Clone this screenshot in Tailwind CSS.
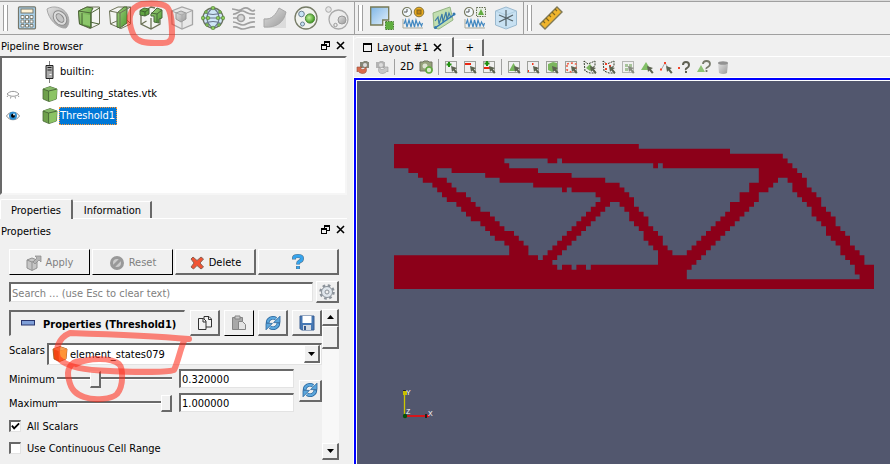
<!DOCTYPE html>
<html lang="en">
<head>
<meta charset="utf-8">
<title>ParaView</title>
<script src="https://cdn.jsdelivr.net/npm/@tailwindcss/browser@4"></script>
</head>
<body class="relative flex min-h-screen flex-col overflow-hidden bg-[#f0f0f0] font-['DejaVu_Sans_Condensed','DejaVu_Sans',sans-serif] text-[11px] leading-[14px] text-black">

<svg class="absolute size-0" aria-hidden="true">
  <defs>
    <linearGradient id="gBlue" x1="0" y1="0" x2="1" y2="1"><stop offset="0" stop-color="#7fb6e6"/><stop offset="1" stop-color="#e4f1fb"/></linearGradient>
    <linearGradient id="gGreen" x1="0" y1="0" x2="1" y2="1"><stop offset="0" stop-color="#9fd07c"/><stop offset="1" stop-color="#4f9a32"/></linearGradient>
    <linearGradient id="gGray" x1="0" y1="0" x2="1" y2="1"><stop offset="0" stop-color="#e2e2e2"/><stop offset="1" stop-color="#9a9a9a"/></linearGradient>
    <radialGradient id="gBall" cx=".4" cy=".4" r=".6"><stop offset="0" stop-color="#c4f29c"/><stop offset="1" stop-color="#3f9a22"/></radialGradient>
    <symbol id="cube" viewBox="0 0 16 16"><path d="M1 3 8 .6 15 3 14.4 13 7 15.6 1 13Z" fill="#6fa04c" stroke="#4b6b38" stroke-width=".8"/><path d="M6.500 5 15 3.200 14.300 13 6.800 15.300Z" fill="#8cc465"/><path d="M1 3 8 .8 14.600 3 6.500 5Z" fill="#86b868"/><path d="M6.600 5v10M1.200 3.200 6.600 5 14.600 3.200" fill="none" stroke="#3f5c30" stroke-width=".8"/></symbol>
    <symbol id="refresh" viewBox="0 0 16 16"><path d="M2.600 8.200A5.300 5.300 0 0 1 11 3.800" fill="none" stroke="#28659c" stroke-width="3.600"/><path d="M15 1.200v6.400H8.600Z" fill="#5ba6dc" stroke="#28659c" stroke-width=".8"/><path d="M13.400 7.800A5.300 5.300 0 0 1 5 12.200" fill="none" stroke="#28659c" stroke-width="3.600"/><path d="M1 14.800V8.400h6.400Z" fill="#5ba6dc" stroke="#28659c" stroke-width=".8"/><path d="M2.700 7.600A5.300 5.300 0 0 1 11 3.800M13.300 8.400A5.300 5.300 0 0 1 5 12.200" fill="none" stroke="#5ba6dc" stroke-width="2.200"/></symbol>
    <symbol id="float" viewBox="0 0 9 9"><path d="M3 0h6v6H6V5h2V2H4v1H3ZM0 3h6v6H0ZM1 5v3h4V5Z" fill="#000" fill-rule="evenodd"/></symbol>
    <symbol id="close" viewBox="0 0 9 9"><path d="M1 1l7 7M8 1 1 8" stroke="#000" stroke-width="1.600"/></symbol>
    <symbol id="cursor" viewBox="0 0 16 16"><path d="M8 7l6 2-2 1.200 2.600 3.200-1.600 1.400-2.600-3.400L9 13Z" fill="#5c6350"/></symbol>
    <symbol id="dots" viewBox="0 0 16 16"><rect x="2.500" y="2.500" width="11" height="11" fill="none" stroke="#4c5146" stroke-dasharray="1 1"/></symbol>
    <symbol id="poly" viewBox="0 0 16 16"><path d="M2 2l4 3 7-3v5l-3 2 4 5H8l-5-2Z" fill="none" stroke="#37402f" stroke-dasharray="2 1"/></symbol>
  </defs>
</svg>

<header class="flex h-9 shrink-0 border-t border-[#dcdcdc] pb-px">
  <div class="flex w-[355px] shrink-0 items-center gap-[7px] border-y border-r border-[#a0a0a0] pl-[3px]">
    <span class="h-[26px] w-[5px] border-x border-[#a0a0a0] bg-white"></span>
    <button aria-label="Calculator"><svg class="size-6" viewBox="0 0 24 24"><rect x="3.500" y=".8" width="17" height="22" rx="1" fill="#a9d2ee" stroke="#77776a" stroke-width="1.200"/><rect x="6" y="3" width="12" height="4" fill="#fff3d6" stroke="#77776a"/><g fill="#fff" stroke="#77776a" stroke-width=".9"><path d="M6 9.500h3v3H6ZM10.500 9.500h3v3h-3ZM15 9.500h3v3h-3ZM6 14h3v3H6ZM10.500 14h3v3h-3ZM15 14h3v3h-3ZM6 18.500h3v2.500H6ZM10.500 18.500h3v2.500h-3ZM15 18.500h3v2.500h-3Z"/></g></svg></button>
    <button aria-label="Contour"><svg class="size-6" viewBox="0 0 24 24"><path d="M1 3C7-1 17 1 21 8c3 6 2 11-1 14C12 23 2 13 1 3Z" fill="url(#gGray)" stroke="#a8a8a8"/><ellipse cx="14" cy="12" rx="6" ry="8" transform="rotate(-38 14 12)" fill="#ddd" stroke="#8c8c8c"/><ellipse cx="14" cy="12" rx="3" ry="5" transform="rotate(-38 14 12)" fill="#c4c4c4" stroke="#858585"/></svg></button>
    <button aria-label="Clip"><svg class="size-6" viewBox="0 0 24 24"><path d="M1.500 5 10 1h12.500v17L13 22.500 2.500 18Z" fill="#f4f5f2" stroke="#6d7358"/><path d="M1.500 5 10 1l6 1-2 4v16L2.500 18Z" fill="url(#gGreen)" stroke="#4d6638"/><path d="M1.500 5 14 7l8.500-5M5 7v12M14 7v15M13 16l9 2" fill="none" stroke="#4d6638"/><path d="M6 8l7 1v11l-7-2Z" fill="#8cc66a"/></svg></button>
    <button aria-label="Slice"><svg class="size-6" viewBox="0 0 24 24"><path d="M1.500 5 10 1h12.500v17L13 22.500 2.500 18Z" fill="#f4f5f2" stroke="#6d7358"/><path d="M9 7l7-6h3v16l-7 5-3-1Z" fill="url(#gGreen)" stroke="#4d6638"/><path d="M1.500 5 12 7l10.500-6M12 7v15M2 18l7-3M19 14l3 3" fill="none" stroke="#6d7358"/></svg></button>
    <button aria-label="Threshold"><svg class="size-6" viewBox="0 0 24 24"><path d="M2 6 12 1l10 4-1 13-9 5-10-5Z" fill="#f4f5f2"/><path d="M2 9v9l10 5 9-5V9M12 12v11M9 3l3-2 4 1M2.500 18l5-3" fill="none" stroke="#6d7358" stroke-width="1.300"/><path d="M1 4.500 5 2l5 1v5l-4 2-5-1Z" fill="#60a441" stroke="#49683a"/><path d="M1 4.500 6 6l4-3M6 6v4" stroke="#3f6130" fill="none"/><path d="M12 8l6-6 5 2v8l-3 1v4l-5-1v-6h-3Z" fill="url(#gGreen)" stroke="#49683a"/><path d="M12 7l6 1 5-4M18 8v8" stroke="#49683a" fill="none"/></svg></button>
    <button aria-label="Extract subset"><svg class="size-6" viewBox="0 0 24 24"><path d="M1.500 5 12 1l10.500 3.500v14L12 23 2 18Z" fill="#e8e8e8" stroke="#a5a5a5" stroke-width="1.300"/><path d="M1.500 5 12 9l10.500-4.500M12 9v14" fill="none" stroke="#a5a5a5"/><path d="M6 7l5-2 5 2v6l-5 3-5-3Z" fill="url(#gGray)" stroke="#999"/><path d="M6 7l6 2 4-2M12 9v6" fill="none" stroke="#aaa"/></svg></button>
    <button aria-label="Glyph"><svg class="size-6" viewBox="0 0 24 24"><circle cx="12" cy="12" r="10" fill="#cfe6f6" stroke="#6c7462" stroke-width="1.400"/><path d="M12 2C4 7 4 17 12 22M12 2c8 5 8 15 0 20M2 12h20M4 6.500c5 2.500 11 2.500 16 0M4 17.500c5-2.500 11-2.500 16 0" fill="none" stroke="#66758a" stroke-width="1.200"/><g fill="#8ccc5e" stroke="#4d7b31" stroke-width=".6"><circle cx="12" cy="2" r="1.800"/><circle cx="12" cy="22" r="1.800"/><circle cx="2" cy="12" r="1.800"/><circle cx="22" cy="12" r="1.800"/><circle cx="7" cy="12" r="1.800"/><circle cx="17" cy="12" r="1.800"/><circle cx="5" cy="6" r="1.400"/><circle cx="19" cy="6" r="1.400"/><circle cx="6" cy="19" r="1.400"/><circle cx="18" cy="19" r="1.400"/></g></svg></button>
    <button aria-label="Stream tracer"><svg class="size-6" viewBox="0 0 24 24"><g fill="none" stroke="#a0a0a0" stroke-width="1.700"><path d="M0 3c4 0 5 2 8 1s5-4 9-1 4 2 6 1M1 8c4 1 6-4 10-3s5 4 12 3M1 12h5M17 12h6M1 16c4 0 6 3 10 3s6-4 12-3M1 21c5-1 6 2 10 2s7-3 12-2"/><circle cx="9" cy="12" r="3.500" fill="#d6d6d6"/></g></svg></button>
    <button aria-label="Warp"><svg class="size-6" viewBox="0 0 24 24"><path d="M1 12h11l6-5 5 3v12H1Z" fill="#dcdcdc"/><path d="M1 13c8 1 12-5 15-11l7 4c-2 10-9 16-22 15Z" fill="url(#gGray)" stroke="#a8a8a8"/></svg></button>
    <button aria-label="Group datasets"><svg class="size-6" viewBox="0 0 24 24"><circle cx="12" cy="12" r="11" fill="#f1f3ee" stroke="#777c67" stroke-width="1.300"/><circle cx="7.500" cy="8" r="2.800" fill="#c8e4f5" stroke="#698092"/><circle cx="8.500" cy="18" r="2" fill="#c8e4f5" stroke="#698092"/><circle cx="16" cy="12.500" r="4.600" fill="url(#gBall)" stroke="#4c8634"/></svg></button>
    <button aria-label="Extract group"><svg class="size-6" viewBox="0 0 24 24"><circle cx="13.500" cy="13.500" r="9.500" fill="#ededed" stroke="#aaa" stroke-width="1.300"/><circle cx="3.500" cy="3.500" r="2.800" fill="#e6e6e6" stroke="#aaa"/><circle cx="10.500" cy="19" r="1.700" fill="none" stroke="#999"/><circle cx="17" cy="14" r="4" fill="url(#gGray)" stroke="#999"/></svg></button>
  </div>
  <div class="flex w-[169px] shrink-0 items-center gap-[7px] border-y border-r border-[#a0a0a0] pl-[3px]">
    <span class="h-[26px] w-[5px] border-x border-[#a0a0a0] bg-white"></span>
    <button aria-label="Find data"><svg class="size-6" viewBox="0 0 24 24"><path d="M.7 1h18v13h-6v5H.7Z" fill="url(#gBlue)" stroke="#777a55" stroke-width="1.300"/><rect x="15.500" y="15.500" width="8" height="8" fill="#5fae3e" stroke="#4b7a34" stroke-dasharray="1.500 1"/></svg></button>
    <button aria-label="Plot selection over time"><svg class="size-6" viewBox="0 0 24 24"><circle cx="6" cy="6" r="4.500" fill="#f3f9fd" stroke="#777a60" stroke-width="1.200"/><path d="M6 3v3H3" stroke="#555" fill="none"/><circle cx="18" cy="6" r="4.800" fill="#ecab1c" stroke="#86743a"/><rect x="16" y="4" width="4" height="4" fill="#c28311" stroke="#7c651f"/><path d="M2 13v9h20" stroke="#a9a99b" fill="none"/><path d="M3 18l1.500-4 1.500 7 2-7 2 7 1.500-7 2 7 1.500-7 2 6 1.500-4 2 4 1-3" fill="none" stroke="#4288c0" stroke-width="1.200"/></svg></button>
    <button aria-label="Plot over line"><svg class="size-6" viewBox="0 0 24 24"><path d="M1 7 18 1l3 13-14 9-5-1Z" fill="#c2dfb0" stroke="#94b484"/><path d="M3 22 23 8" stroke="#2c75b6" stroke-width="1.500"/><circle cx="3.500" cy="21.500" r="1.500" fill="#3478ae"/><circle cx="22" cy="8" r="1.500" fill="#3478ae"/><path d="M3 15l3-4 1 7 3-10 1 8 3-10 1 8 2-7 2 5" fill="none" stroke="#3c7ca7" stroke-width="1.200"/></svg></button>
    <button aria-label="Plot data over time"><svg class="size-6" viewBox="0 0 24 24"><circle cx="6" cy="6" r="4.500" fill="#f3f9fd" stroke="#777a60" stroke-width="1.200"/><path d="M6 3v3H3" stroke="#555" fill="none"/><rect x="13.500" y="1.500" width="9" height="9" fill="#e8eee4" stroke="#626b50" stroke-dasharray="1.500 1"/><path d="M15 9l3-6 3 6Z" fill="#61ac40"/><path d="M2 13v9h20" stroke="#a9a99b" fill="none"/><path d="M3 18l1.500-4 1.500 7 2-7 2 7 1.500-7 2 7 1.500-7 2 6 1.500-4 2 4 1-3" fill="none" stroke="#4288c0" stroke-width="1.200"/></svg></button>
    <button aria-label="Probe location"><svg class="size-6" viewBox="0 0 24 24"><path d="M1.500 5 12 1l10.500 4v14L12 23 1.500 19Z" fill="#c8e1f2" stroke="#9ab9cf"/><path d="M1.500 5 12 9l10.500-4M12 9v14" fill="none" stroke="#b0cfe2"/><path d="M12 4v16M5 9l14 6M5 16l14-7" stroke="#57656b" stroke-width="1.200"/></svg></button>
  </div>
  <div class="flex min-w-0 flex-1 items-center gap-[7px] border-y border-[#a0a0a0] pl-[3px]">
    <span class="h-[26px] w-[5px] border-x border-[#a0a0a0] bg-white"></span>
    <button aria-label="Ruler"><svg class="size-6" viewBox="0 0 24 24"><path d="M1 18 18 1l5 5L6 23Z" fill="#f0b52c" stroke="#7f7956" stroke-width="1.400"/><path d="M4 15l2 2M7 12l3 3M10 9l2 2M13 6l3 3M16 3l2 2" stroke="#7f651d" stroke-width="1.100"/></svg></button>
  </div>
</header>

<main class="flex min-h-0 flex-1">
  <aside class="flex w-[354px] shrink-0 flex-col border-r border-white">
    <div class="mr-2 flex h-5 items-center justify-between pt-0.5 pl-px">
      <h2>Pipeline Browser</h2>
      <span class="flex gap-1.5 pb-1"><button aria-label="Float"><svg class="size-[9px]"><use href="#float"/></svg></button><button aria-label="Close"><svg class="size-[9px]"><use href="#close"/></svg></button></span>
    </div>
    <ul class="mr-1.5 h-[139px] shrink-0 border-2 border-t-[#696969] border-r-[#f6f6f6] border-b-[#f6f6f6] border-l-[#696969] bg-white pt-[3px]">
      <li class="flex h-[22px] items-center"><span class="w-[38px]"></span><svg class="mr-1 h-[22px] w-4" viewBox="0 0 16 22"><path d="M9.500-2v6M9.500 18v4" stroke="#808080"/><path d="M6 4.500h7v13H6Z" fill="#aaa" stroke="#222"/><path d="M7.500 6.500h4M7.500 9h4" stroke="#222"/><path d="M9.500 13.500h2" stroke="#fff"/></svg>builtin:</li>
      <li class="flex h-[22px] items-center"><svg class="mr-[22px] ml-1 size-3.5" viewBox="0 0 14 14" fill="none" stroke="#999"><path d="M1 7c3-3.500 9-3.500 12 0M1 7c3 3 9 3 12 0M2 8.500 1 10M5 9.500l-.5 2M9 9.500l.5 2M12 8.500l1 1.500"/></svg><svg class="mr-0.5 size-4"><use href="#cube"/></svg>resulting_states.vtk</li>
      <li class="flex h-[22px] items-center"><svg class="mr-[22px] ml-1 size-3.5" viewBox="0 0 14 14"><path d="M.5 7c3-5 10-5 13 0-3 5-10 5-13 0Z" fill="#fff" stroke="#888"/><circle cx="7" cy="6.700" r="4" fill="#2f8ed0"/><circle cx="7" cy="6.700" r="2" fill="#000"/><circle cx="8" cy="5.500" r=".9" fill="#fff"/></svg><svg class="mr-px size-4"><use href="#cube"/></svg><span class="flex h-[18px] items-center border border-dotted border-[#ff9632] bg-[#0078d7] pr-px text-white">Threshold1</span></li>
    </ul>
    <nav class="mt-1 mr-1.5 flex h-5 shrink-0 items-end">
      <button class="h-5 w-[73px] rounded-t-xs border-t border-r-2 border-l border-t-white border-r-[#696969] border-l-white pt-0.5">Properties</button>
      <div class="flex h-5 flex-1 items-end border-b border-white"><button class="h-[17px] w-[79px] border-t border-r-2 border-t-white border-r-[#696969] pt-0.5 pl-0.5">Information</button></div>
    </nav>
    <div class="mr-2 flex h-6 shrink-0 items-center justify-between pt-0.5 pl-px">
      <h2>Properties</h2>
      <span class="flex gap-1.5 pb-1.5"><button aria-label="Float"><svg class="size-[9px]"><use href="#float"/></svg></button><button aria-label="Close"><svg class="size-[9px]"><use href="#close"/></svg></button></span>
    </div>
    <section class="mt-1.5 mr-[14px] ml-[9px] flex flex-col">
      <div class="grid h-[26px] grid-cols-4 gap-0.5">
        <button disabled class="flex items-center justify-center gap-1 border border-t-white border-r-black border-b-black border-l-white pt-0.5 text-[#808080]"><svg class="size-4" viewBox="0 0 16 16"><path d="M1 5l5-2 5 2v8l-5 2.500L1 13Z" fill="#c6c6c6" stroke="#909090"/><path d="M1 5l5 2 5-2M6 7v8" stroke="#909090" fill="none"/><path d="M7 7l4-4-2-2h6v6l-2-2-4 4Z" fill="#b4b4b4" stroke="#888" stroke-width=".7"/></svg>Apply</button>
        <button disabled class="flex items-center justify-center gap-1 border border-t-white border-r-black border-b-black border-l-white pt-0.5 text-[#808080]"><svg class="size-4" viewBox="0 0 16 16"><circle cx="8" cy="8" r="5.500" fill="#ccc" stroke="#999" stroke-width="3"/><path d="M4.500 11.500l7-7" stroke="#999" stroke-width="3"/></svg>Reset</button>
        <button class="flex items-center justify-center gap-1 border-t border-r-2 border-b-2 border-l border-t-white border-r-[#696969] border-b-[#696969] border-l-white pt-0.5"><svg class="size-4" viewBox="0 0 16 16"><path d="M2 4l2-2 4 3.500L12 2l2.500 2L11 8l3.500 4-2.500 2-4-3.500L4.500 14 2 12l3-4Z" fill="#f15332" stroke="#8d6152"/></svg>Delete</button>
        <button aria-label="Help" class="flex items-center justify-center border-t border-r-2 border-b-2 border-l border-t-white border-r-[#696969] border-b-[#696969] border-l-white"><svg class="size-4" viewBox="0 0 16 16" fill="none"><path d="M4 5.500V4q0-2 4-2t4 2.500Q12 6.500 9.500 7.500 8 8.300 8 10.500M8 12v3" stroke="#55748c" stroke-width="4"/><path d="M4 5V4q0-2 4-2t4 2.500Q12 6.500 9.500 7.500 8 8.300 8 10.200M8 12.300v2.400" stroke="#35a4ee" stroke-width="2.800"/></svg></button>
      </div>
      <div class="mt-1.5 flex h-[22px] items-center gap-[3px]">
        <input type="text" aria-label="Search" placeholder="Search ... (use Esc to clear text)" class="h-5 min-w-0 flex-1 border-t-2 border-r border-b border-l-2 border-t-[#696969] border-r-[#e3e3e3] border-b-[#e3e3e3] border-l-[#696969] bg-white pt-px pl-px placeholder:text-[#808080]">
        <button aria-label="Advanced" class="flex h-[22px] w-[23px] items-center justify-center border-t border-r-2 border-b-2 border-l border-t-white border-r-[#696969] border-b-[#696969] border-l-white"><svg class="size-4" viewBox="0 0 16 16"><circle cx="8" cy="8" r="6.500" fill="none" stroke="#8b929a" stroke-width="2.500" stroke-dasharray="2.600 2.500"/><circle cx="8" cy="8" r="5.500" fill="#e0e6ec" stroke="#8b929a"/><circle cx="8" cy="8" r="2" fill="#f0f0f0" stroke="#8b929a"/></svg></button>
      </div>
      <div class="mt-1.5 flex h-[151px]">
        <div class="flex min-w-0 flex-1 flex-col">
          <div class="mt-px flex h-[26px] gap-1">
            <button class="mr-px flex min-w-0 flex-1 items-center gap-2 border-t-2 border-r border-b border-l-2 border-t-[#696969] border-r-[#f0f0f0] border-b-[#f0f0f0] border-l-[#696969] pt-0.5 pl-2.5 font-bold whitespace-nowrap"><svg class="mb-1 h-1.5 w-3.5 shrink-0" viewBox="0 0 14 6"><rect x=".5" y=".5" width="13" height="4.500" fill="#7f9fd8" stroke="#28346c"/></svg><span class="overflow-hidden">Properties (Threshold1)</span></button>
            <button aria-label="Copy" class="flex w-[30px] items-center justify-center border-t border-r-2 border-b-2 border-l border-t-white border-r-[#696969] border-b-[#696969] border-l-white"><svg class="size-4" viewBox="0 0 16 16" stroke="#333" fill="#f2f2f2"><path d="M7 1.500h5l2.500 2.500v8H7Z"/><path d="M1.500 3.500h5L9 6v8.500H1.500Z"/><path d="M6 4v3h3M11.500 2v2.500h3" fill="none"/></svg></button>
            <button disabled aria-label="Paste" class="flex w-[30px] items-center justify-center border border-t-white border-r-black border-b-black border-l-white"><svg class="size-4" viewBox="0 0 16 16" stroke="#858585"><path d="M1.500 2.500h10v12h-10Z" fill="#a8a8a8"/><path d="M4 1h5v3H4Z" fill="#ccc"/><path d="M7.500 6.500h4l3 3v5h-7Z" fill="#e4e4e4"/></svg></button>
            <button aria-label="Restore defaults" class="flex w-[30px] items-center justify-center border-t border-r-2 border-b-2 border-l border-t-white border-r-[#696969] border-b-[#696969] border-l-white"><svg class="size-4"><use href="#refresh"/></svg></button>
            <button aria-label="Save defaults" class="flex w-[30px] items-center justify-center border-t border-r-2 border-b-2 border-l border-t-white border-r-[#696969] border-b-[#696969] border-l-white"><svg class="size-4" viewBox="0 0 16 16"><path d="M1 1h14v14H2.500L1 13.500Z" fill="#4678b4" stroke="#3a5f92"/><rect x="3.500" y="1" width="9" height="7" fill="#fff"/><rect x="4" y="10" width="8" height="5" fill="#d4dae2"/><rect x="5" y="11" width="2" height="4" fill="#35588a"/></svg></button>
          </div>
          <div class="mt-[7px] flex h-[22px]">
            <label for="scalars" class="w-[38px] shrink-0 pt-px">Scalars</label>
            <div class="relative min-w-0 flex-1">
              <select id="scalars" class="h-[22px] w-full appearance-none border-t-2 border-r border-b border-l-2 border-t-[#696969] border-r-[#e3e3e3] border-b-[#e3e3e3] border-l-[#696969] bg-white pt-px pl-[21px]"><option>element_states079</option></select>
              <svg class="pointer-events-none absolute top-[3px] left-[5px] size-4" viewBox="0 0 16 16"><path d="M1 3 8 .6 15 3l-1 10-6.500 2.500L2 13Z" fill="#e4680d" stroke="#9b4c18" stroke-width=".8"/><path d="M6.500 5 15 3l-1 10-7 2.400Z" fill="#ff9436"/><path d="M1 3 8 .8 15 3 6.500 5Z" fill="#f5a259"/></svg>
              <span class="pointer-events-none absolute top-0.5 right-0.5 flex h-[18px] w-4 items-center justify-center border-t border-r-2 border-b-2 border-l border-t-white border-r-[#696969] border-b-[#696969] border-l-white bg-[#f0f0f0]"><svg class="h-1 w-[7px]" viewBox="0 0 7 4"><path d="M0 0h7L3.500 4Z"/></svg></span>
            </div>
          </div>
          <div class="mt-1 flex items-center gap-[5px]">
            <div class="grid min-w-0 flex-1 grid-cols-[48px_115px_minmax(0,1fr)] items-center gap-y-[5px]">
              <label for="min" class="pt-0.5">Minimum</label>
              <input id="min" type="range" min="0" max="1" step="0.01" value="0.32" class="h-[19px] w-full appearance-none bg-transparent [&::-webkit-slider-runnable-track]:h-[3px] [&::-webkit-slider-runnable-track]:border-t-2 [&::-webkit-slider-runnable-track]:border-b [&::-webkit-slider-runnable-track]:border-t-[#696969] [&::-webkit-slider-runnable-track]:border-b-white [&::-webkit-slider-thumb]:-mt-2 [&::-webkit-slider-thumb]:h-[17px] [&::-webkit-slider-thumb]:w-[11px] [&::-webkit-slider-thumb]:appearance-none [&::-webkit-slider-thumb]:border-t [&::-webkit-slider-thumb]:border-r-2 [&::-webkit-slider-thumb]:border-b-2 [&::-webkit-slider-thumb]:border-l [&::-webkit-slider-thumb]:border-t-white [&::-webkit-slider-thumb]:border-r-[#696969] [&::-webkit-slider-thumb]:border-b-[#696969] [&::-webkit-slider-thumb]:border-l-white [&::-webkit-slider-thumb]:bg-[#f0f0f0]">
              <input type="text" aria-label="Minimum value" value="0.320000" class="ml-[7px] h-[19px] min-w-0 border-t-2 border-r border-b border-l-2 border-t-[#696969] border-r-[#e3e3e3] border-b-[#e3e3e3] border-l-[#696969] bg-white pt-px pl-px">
              <label for="max" class="pt-0.5">Maximum</label>
              <input id="max" type="range" min="0" max="1" step="0.01" value="1" class="h-[19px] w-full appearance-none bg-transparent [&::-webkit-slider-runnable-track]:h-[3px] [&::-webkit-slider-runnable-track]:border-t-2 [&::-webkit-slider-runnable-track]:border-b [&::-webkit-slider-runnable-track]:border-t-[#696969] [&::-webkit-slider-runnable-track]:border-b-white [&::-webkit-slider-thumb]:-mt-2 [&::-webkit-slider-thumb]:h-[17px] [&::-webkit-slider-thumb]:w-[11px] [&::-webkit-slider-thumb]:appearance-none [&::-webkit-slider-thumb]:border-t [&::-webkit-slider-thumb]:border-r-2 [&::-webkit-slider-thumb]:border-b-2 [&::-webkit-slider-thumb]:border-l [&::-webkit-slider-thumb]:border-t-white [&::-webkit-slider-thumb]:border-r-[#696969] [&::-webkit-slider-thumb]:border-b-[#696969] [&::-webkit-slider-thumb]:border-l-white [&::-webkit-slider-thumb]:bg-[#f0f0f0]">
              <input type="text" aria-label="Maximum value" value="1.000000" class="ml-[7px] h-[19px] min-w-0 border-t-2 border-r border-b border-l-2 border-t-[#696969] border-r-[#e3e3e3] border-b-[#e3e3e3] border-l-[#696969] bg-white pt-px pl-px">
            </div>
            <button aria-label="Reset range" class="flex h-[22px] w-[23px] items-center justify-center border-t border-r-2 border-b-2 border-l border-t-white border-r-[#696969] border-b-[#696969] border-l-white"><svg class="size-4"><use href="#refresh"/></svg></button>
          </div>
          <label class="mt-[7px] flex h-[14px] items-center gap-1.5"><span class="relative flex size-3"><input type="checkbox" checked class="peer size-3 appearance-none border-t-2 border-r border-b border-l-2 border-t-[#696969] border-r-[#e3e3e3] border-b-[#e3e3e3] border-l-[#696969] bg-white"><svg class="absolute top-0.5 left-0.5 hidden size-[9px] peer-checked:block" viewBox="0 0 10 10"><path d="M1 4l2.500 3L9 1.500" fill="none" stroke="#000" stroke-width="2"/></svg></span><span class="pt-0.5">All Scalars</span></label>
          <label class="mt-2 flex h-[14px] items-center gap-1.5"><input type="checkbox" class="size-3 appearance-none border-t-2 border-r border-b border-l-2 border-t-[#696969] border-r-[#e3e3e3] border-b-[#e3e3e3] border-l-[#696969] bg-white"><span class="pt-0.5">Use Continuous Cell Range</span></label>
        </div>
        <div class="flex w-[17px] flex-col bg-[#f8f8f8]">
          <button aria-label="Scroll up" class="flex h-[17px] items-center justify-center border-t border-r-2 border-b-2 border-l border-t-white border-r-[#696969] border-b-[#696969] border-l-white bg-[#f0f0f0]"><svg class="h-1 w-[7px]" viewBox="0 0 7 4"><path d="M0 4h7L3.500 0Z"/></svg></button>
          <div class="h-[23px] border-t border-r-2 border-b-2 border-l border-t-white border-r-[#696969] border-b-[#696969] border-l-white bg-[#f0f0f0]"></div>
          <button aria-label="Scroll down" class="mt-auto flex h-[17px] items-center justify-center border-t border-r-2 border-b-2 border-l border-t-white border-r-[#696969] border-b-[#696969] border-l-white bg-[#f0f0f0]"><svg class="h-1 w-[7px]" viewBox="0 0 7 4"><path d="M0 0h7L3.500 4Z"/></svg></button>
        </div>
      </div>
    </section>
  </aside>

  <section class="flex min-w-0 flex-1 flex-col">
    <nav class="flex h-[21px] shrink-0 items-end">
      <div class="flex h-5 w-[100px] items-center gap-[5px] rounded-tl-sm border-t border-r-2 border-t-white border-r-[#696969] pl-[9px]"><svg class="size-[9px]" viewBox="0 0 9 9"><path d="M0 0h9v9H0ZM1 2v6h7V2Z" fill-rule="evenodd"/></svg><button class="whitespace-nowrap">Layout #1</button><button aria-label="Close layout"><svg class="size-[9px]"><use href="#close"/></svg></button></div>
      <div class="flex h-5 flex-1 items-end border-b border-white"><button class="h-[17px] w-[30px] border-t border-r-2 border-t-white border-r-[#696969] pl-1">+</button></div>
    </nav>
    <div class="flex h-[21px] shrink-0 items-center gap-[3px] border-b border-white pl-px">
      <button aria-label="Undo camera"><svg class="size-4" viewBox="0 0 16 16"><path d="M5 3h3l1-1h3l1 1h1v6H5Z" fill="#858677"/><circle cx="10" cy="6" r="2" fill="#ddd"/><path d="M2 8h5L5.500 9.500Q9 12 11 8q2 7-4 6.500-3-.5-4-2.500L2 13Z" fill="#d96a4b" stroke="#96533f" stroke-width=".6"/></svg></button>
      <button aria-label="Redo camera"><svg class="size-4" viewBox="0 0 16 16"><path d="M2 3h3l1-1h3l1 1h1v6H2Z" fill="#b3b3b3"/><circle cx="7" cy="6" r="2" fill="#ddd"/><path d="M14 8H9l1.500 1.500Q7 12 5 8q-2 7 4 6.500 3-.5 4-2.500l1 1Z" fill="#c8c8c8" stroke="#999" stroke-width=".6"/></svg></button>
      <span class="mx-px h-4 w-px bg-[#a0a0a0]"></span>
      <button class="w-4">2D</button>
      <button aria-label="Adjust camera"><svg class="size-4" viewBox="0 0 16 16"><path d="M2 3h3l1-1h4l1 1h3v9H2Z" fill="#96a27c" stroke="#707560"/><circle cx="7" cy="7" r="2.500" fill="#dfe5d4"/><circle cx="11" cy="11" r="3" fill="#dceccc" stroke="#60a93f" stroke-width="1.600"/></svg></button>
      <span class="mx-px h-4 w-px bg-[#a0a0a0]"></span>
      <button aria-label="Add selection"><svg class="size-4" viewBox="0 0 16 16"><use href="#dots"/><path d="M6 3v5M3.500 5.500h5" stroke="#239013" stroke-width="2"/><use href="#cursor"/></svg></button>
      <button aria-label="Subtract selection"><svg class="size-4" viewBox="0 0 16 16"><use href="#dots"/><path d="M3 5h6" stroke="#ea2712" stroke-width="2"/><use href="#cursor"/></svg></button>
      <button aria-label="Toggle selection"><svg class="size-4" viewBox="0 0 16 16"><use href="#dots"/><path d="M6 2v5M3.500 4.500h5" stroke="#239013" stroke-width="2"/><path d="M3 9h6" stroke="#ea2712" stroke-width="2"/><use href="#cursor"/></svg></button>
      <span class="mx-px h-4 w-px bg-[#a0a0a0]"></span>
      <button aria-label="Select cells on"><svg class="size-4" viewBox="0 0 16 16"><use href="#dots"/><path d="M3 12 7.500 4l4.500 8Z" fill="#79b75d"/><use href="#cursor"/></svg></button>
      <button aria-label="Select points on"><svg class="size-4" viewBox="0 0 16 16"><use href="#dots"/><path d="M3 12h1M7 5h1.500M11 9h1" stroke="#f43a1f" stroke-width="2"/><use href="#cursor"/></svg></button>
      <button aria-label="Select cells through"><svg class="size-4" viewBox="0 0 16 16"><use href="#dots"/><path d="M4 5l5-2 4 1v7l-5 2-4-2Z" fill="#7cb65f"/><use href="#cursor"/></svg></button>
      <button aria-label="Select points through"><svg class="size-4" viewBox="0 0 16 16"><use href="#dots"/><path d="M4 5l5-1 4 1v6l-5 2-4-2Z" fill="none" stroke="#f05f46" stroke-dasharray="2 2" stroke-width="1.500"/><use href="#cursor"/></svg></button>
      <button aria-label="Select cells polygon"><svg class="size-4" viewBox="0 0 16 16"><use href="#poly"/><path d="M4 9l4-4 3 4-3 3Z" fill="#7cb65f"/><use href="#cursor"/></svg></button>
      <button aria-label="Select points polygon"><svg class="size-4" viewBox="0 0 16 16"><use href="#poly"/><path d="M4 5h2M8 7h2M4 10h2" stroke="#f0422a" stroke-width="2"/><use href="#cursor"/></svg></button>
      <button aria-label="Select block"><svg class="size-4 opacity-70" viewBox="0 0 16 16"><use href="#dots"/><path d="M5 5h3v3H5ZM9 5h3v3H9ZM5 9h3v3H5Z" fill="#89b176"/><use href="#cursor"/></svg></button>
      <button aria-label="Interactive cells"><svg class="size-4" viewBox="0 0 16 16"><path d="M2 11 7 3l5 8Z" fill="#82bf67"/><use href="#cursor"/></svg></button>
      <button aria-label="Interactive points"><svg class="size-4" viewBox="0 0 16 16"><path d="M3 11 7 4l4 6" fill="none" stroke="#aaa"/><path d="M2 10.500h2M6 4h2" stroke="#f4442a" stroke-width="2"/><use href="#cursor"/></svg></button>
      <button aria-label="Hover points"><svg class="size-4" viewBox="0 0 16 16"><path d="M1 9h2" stroke="#f4442a" stroke-width="2"/><path d="M6 6q0-3 3-3t3 3q0 2-1.800 2.800T9 11M9 12v2" fill="none" stroke="#5e6052" stroke-width="2"/></svg></button>
      <button aria-label="Hover cells"><svg class="size-4" viewBox="0 0 16 16"><path d="M1 13l4-7 4 7Z" fill="#8ec275"/><path d="M7 5q0-3 3.500-3T14 5q0 2-2 3t-1.500 2M10.500 11v2" fill="none" stroke="#76796a" stroke-width="1.800"/></svg></button>
      <button aria-label="Clear selection"><svg class="size-4" viewBox="0 0 16 16"><path d="M3 4h10l-1 10q-4 2-8 0Z" fill="url(#gGray)"/><ellipse cx="8" cy="4" rx="5" ry="1.800" fill="#929292"/></svg></button>
    </div>
    <div class="flex min-h-0 flex-1 border-t-2 border-l-2 border-[#0000ff]">
      <div class="relative min-w-0 flex-1 overflow-hidden border-t border-l border-white bg-[#52576e]">
        <!-- Element mesh: 100 x 30 cells -->
        <svg class="absolute top-[63px] left-[37px] h-[145px] w-[480px]" viewBox="0 0 100 30" preserveAspectRatio="none" role="img" aria-label="Threshold1">
          <path fill="#8c0019" fill-rule="evenodd" d="M0 0H51V1H70V2H81V3H82V4H83V5H84V6H85V7H86V9H87V10H88V11H89V13H90V14H91V15H92V17H93V18H94V19H95V21H96V22H97V23H98V25H100V30H0V23H24V21H23V20H21V19H20V18H19V17H18V16H16V15H15V14H14V13H13V12H11V11H10V10H9V9H8V8H6V7H5V6H3V5H0Z
          M9 5H12V6H19V7H22V8H29V9H35V10H36V9H37V10H42V11H43V12H42V13H41V14H40V15H39V16H38V17H37V18H36V19H35V20H34V21H33V22H32V23H31V24H30V23H28V21H27V20H26V19H25V18H23V17H22V16H21V15H20V14H18V13H17V12H16V11H15V10H13V9H12V8H11V7H9Z
          M45 12H47V13H48V14H49V16H50V17H51V18H52V20H53V21H54V22H55V25H41V26H40V25H38V26H37V25H35V26H34V25H33V24H34V23H35V22H36V21H37V20H38V19H39V18H40V17H41V16H42V15H43V14H44V13H45Z
          M23 3H32V4H34V3H35V4H54V5H55V4H56V5H76V8H74V10H72V12H70V14H69V15H68V16H67V17H66V18H65V19H64V20H63V21H62V22H61V23H58V22H57V21H56V19H55V18H54V17H53V15H52V14H51V13H50V11H49V10H48V9H47V8H44V7H37V6H30V5H24V4H23Z
          M80 7H82V8H83V10H84V11H85V12H86V13H87V15H88V16H89V17H90V19H91V20H92V21H93V23H94V24H95V25H96V27H97V28H61V26H62V25H63V24H64V23H65V22H66V21H67V20H68V19H69V18H70V17H71V16H72V15H73V14H74V13H75V12H76V10H78V9H79V8H80Z"/>
        </svg>
        <!-- Orientation axes -->
        <svg class="absolute top-[304px] left-[40px] h-9 w-9" viewBox="0 0 36 36">
          <path d="M7.500 8v22" stroke="#cfc800" stroke-width="1.300"/><path d="M6 6h4v4H6Z" fill="#c9c000"/><path d="M6 5h4v1H6Z" fill="#222"/>
          <path d="M8 31h22" stroke="#f00" stroke-width="1.500"/><path d="M28 29h2v4h-2Z" fill="#222"/><path d="M30 29.500l3 1.500-3 1.500Z" fill="#f00"/><circle cx="8" cy="31" r="2.200" fill="#05500c"/>
          <g fill="#fff" font-size="7" font-family="Liberation Sans"><text x="9" y="10">Y</text><text x="9" y="29">Z</text><text x="31" y="31">X</text></g>
        </svg>
      </div>
    </div>
  </section>
</main>

<!-- Red marker annotations -->
<svg class="pointer-events-none absolute top-0 left-0 h-[464px] w-[355px]" viewBox="0 0 355 464" fill="none" stroke="#ff2a18" stroke-opacity=".57" stroke-width="6" stroke-linecap="round" stroke-linejoin="round" aria-hidden="true">
  <path d="M142 4C152 3 162 3 167 7C172 12 172 26 172 36C171 44 165 43 155 43C145 43 138 42 134 36C131 30 129 22 130 16C131 10 135 6 142 4Z"/>
  <path d="M189 339C165 337 100 334 70 333C58 338 55 350 58 358C68 368 85 370 110 371C140 372 165 373 174 370C178 362 180 350 184 341"/>
  <path d="M80 361C70 362 66 370 69 380C71 390 76 394 84 397C95 401 112 399 117 394C124 386 123 368 119 364C112 358 90 357 76 364"/>
</svg>
</body>
</html>
